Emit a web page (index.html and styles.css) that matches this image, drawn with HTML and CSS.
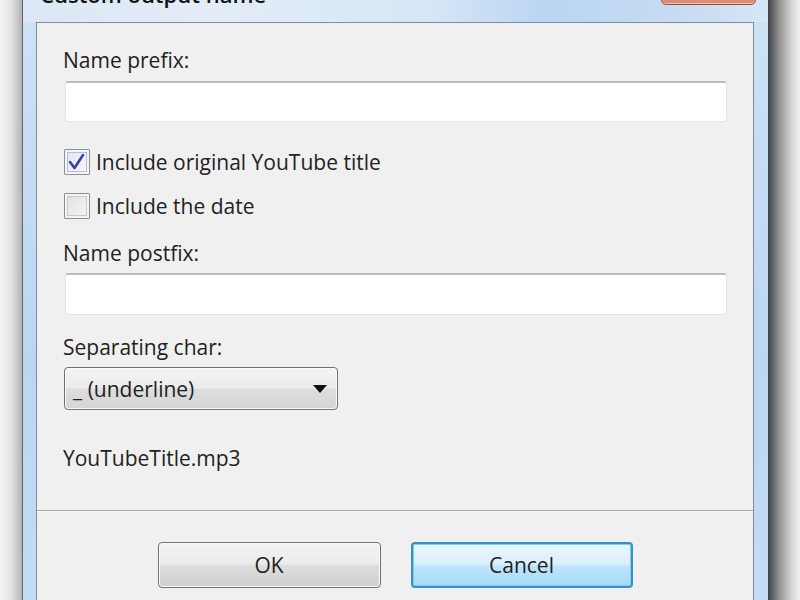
FILE: index.html
```html
<!DOCTYPE html>
<html lang="en">
<head>
  <meta charset="UTF-8" />
  <title>Custom output name</title>
  <link rel="stylesheet" href="styles.css">
</head>
<body>
  <div class="desktop">
    <div class="shadow-left"></div>

    <div class="window">
      <div class="titlebar">
        <span class="title">Custom output name</span>
        <span class="close-btn"></span>
      </div>

      <div class="client">
        <div class="form">
          <div class="label">Name prefix:</div>
          <div class="textbox first"></div>

          <div class="check-row first-check">
            <span class="checkbox checked">
              <svg width="24" height="24" viewBox="0 0 24 24">
                <path d="M5 12 L9.5 18 L18 5" fill="none" stroke="#3c3fa6" stroke-width="2.6" stroke-linecap="round" stroke-linejoin="round"/>
              </svg>
            </span>
            <span>Include original YouTube title</span>
          </div>

          <div class="check-row">
            <span class="checkbox"></span>
            <span>Include the date</span>
          </div>

          <div class="label postfix">Name postfix:</div>
          <div class="textbox"></div>

          <div class="label sep">Separating char:</div>
          <div class="dropdown">
            <span>_ (underline)</span>
            <svg width="16" height="10" viewBox="0 0 16 10">
              <polygon points="1,1 15,1 8,9" fill="#111"/>
            </svg>
          </div>

          <div class="result">YouTubeTitle.mp3</div>
        </div>

        <div class="footer">
          <button class="btn">OK</button>
          <button class="btn default">Cancel</button>
        </div>
      </div>
    </div>

    <div class="shadow-right"></div>
  </div>
</body>
</html>
```

FILE: styles.css
```css
body {
  margin: 0;
  padding: 0;
  font-family: "Open Sans", "Noto Sans", sans-serif;
  color: #222;
  background: #f2f2f2;
}

.desktop {
  display: flex;
  width: 800px;
  height: 600px;
  overflow: hidden;
}

.shadow-left {
  width: 22px;
  background: linear-gradient(to right, #f6f6f6, #e4e4e4 50%, #b4b4b4);
}

.shadow-right {
  width: 31px;
  background: linear-gradient(to right, #4a4a4a, #8c8c8c 30%, #d8d8d8 75%, #efefef);
}

.window {
  flex: 1;
  display: flex;
  flex-direction: column;
  border-left: 1px solid #5c6673;
  border-right: 1px solid #3e4652;
  padding: 0 14px 0 13px;
  background: linear-gradient(to bottom, #cfe2f6, #bcd6f1 60%, #c4dcf3);
}

.titlebar {
  height: 22px;
  display: flex;
  justify-content: space-between;
  background: linear-gradient(to right, #dbe7f4, #e3edf8 25%, #d6e6f6 55%, #bad5f2 70%, #c8ddf3 90%, #d5e6f7);
  margin: 0 -14px 0 -13px;
  padding: 0 13px 0 17px;
}

.title {
  margin-top: -19px;
  font-size: 22px;
  line-height: 26px;
  font-weight: 600;
  color: #111;
  white-space: nowrap;
}

.close-btn {
  width: 95px;
  height: 25px;
  margin-top: -20px;
  margin-right: -1px;
  box-sizing: border-box;
  border: 1px solid #9b4b35;
  border-radius: 0 0 5px 5px;
  background: linear-gradient(to bottom, #e9a792, #d98a72);
  box-shadow: inset 0 -1px 0 #f2c4b3;
}

.client {
  flex: 1;
  border: 1px solid #7d8b9c;
  border-bottom: none;
  background: #f0f0f0;
}

.form {
  padding: 25px 26px 0 26px;
  font-size: 21px;
}

.label {
  line-height: 24px;
  height: 24px;
  white-space: nowrap;
}

.label.postfix {
  margin-top: 21px;
}

.label.sep {
  margin-top: 20px;
}

.textbox {
  height: 42px;
  margin-top: 8px;
  margin-left: 2px;
  box-sizing: border-box;
  background: #fff;
  border: 1px solid #e2e6eb;
  border-top: 2px solid #b9bcc2;
  border-radius: 3px;
}

.textbox.first {
  height: 41px;
  margin-top: 9px;
}

.check-row {
  display: flex;
  align-items: center;
  gap: 6px;
  height: 28px;
  margin-top: 16px;
  white-space: nowrap;
}

.check-row.first-check {
  margin-top: 26px;
}

.checkbox {
  width: 26px;
  height: 26px;
  margin-left: 1px;
  box-sizing: border-box;
  border: 1px solid #8e8f91;
  border-radius: 1px;
  background: linear-gradient(to bottom right, #dedede, #f8f8f8);
  box-shadow: inset 0 0 0 2px #f4f4f4, inset 0 0 0 3px #c9c9c9;
  display: flex;
  align-items: center;
  justify-content: center;
}

.checkbox.checked {
  background: linear-gradient(to bottom right, #e2e6f4, #f8f9fc);
  box-shadow: inset 0 0 0 2px #f4f5fa, inset 0 0 0 3px #b9bdd2;
}

.dropdown {
  width: 274px;
  height: 43px;
  margin-top: 8px;
  margin-left: 1px;
  box-sizing: border-box;
  border: 1px solid #6f6f6f;
  border-radius: 4px;
  background: linear-gradient(to bottom, #f4f4f4, #ececec 48%, #dedede 52%, #d4d4d4);
  box-shadow: inset 0 0 0 1px #fafafa;
  display: flex;
  align-items: center;
  justify-content: space-between;
  padding: 0 9px 0 8px;
}

.result {
  margin-top: 36px;
  line-height: 24px;
  height: 24px;
}

.footer {
  margin-top: 40px;
  border-top: 1px solid #a6a6a6;
  box-shadow: inset 0 1px 0 #fbfbfb;
  display: flex;
  justify-content: center;
  gap: 30px;
  padding-top: 31px;
}

.btn {
  width: 223px;
  height: 46px;
  font-family: "Open Sans", "Noto Sans", sans-serif;
  font-size: 21px;
  color: #222;
  border: 1px solid #707070;
  border-radius: 4px;
  background: linear-gradient(to bottom, #f3f3f3, #ebebeb 48%, #dddddd 52%, #cfcfcf);
  box-shadow: inset 0 0 0 1px #fbfbfb;
  cursor: pointer;
}

.btn.default {
  width: 222px;
  border: 2px solid #3c8fc6;
  background: linear-gradient(to bottom, #eaf6fd, #d9f0fc 48%, #bee6fd 52%, #a7d9f5);
  box-shadow: inset 0 0 0 1px #7ad0f5;
}
```
